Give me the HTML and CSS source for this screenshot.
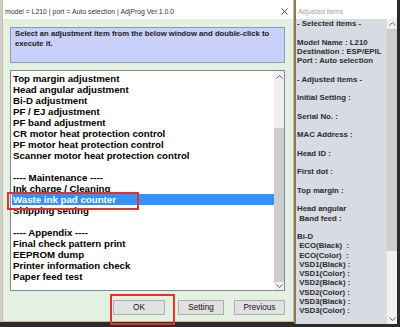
FILE: index.html
```html
<!DOCTYPE html>
<html lang="en">
<head>
  <meta charset="UTF-8" />
  <title>AdjProg</title>
  <link rel="stylesheet" href="styles.css">
</head>
<body>
  <div class="desktop">
    <div class="edge"></div>

    <section class="main-window">
      <header class="title-bar">
        <span class="title">model = L210 | port = Auto selection | AdjProg Ver.1.0.0</span>
        <svg class="close" width="7" height="7" viewBox="0 0 7 7">
          <path d="M0.5 0.5 L6.5 6.5 M6.5 0.5 L0.5 6.5" stroke="#444" stroke-width="1" fill="none"/>
        </svg>
      </header>

      <div class="instructions">Select an adjustment item from the below window and double-click to execute it.</div>

      <div class="list-box">
        <ul class="list-items">
          <li>Top margin adjustment</li>
          <li>Head angular adjustment</li>
          <li>Bi-D adjustment</li>
          <li>PF / EJ adjustment</li>
          <li>PF band adjustment</li>
          <li>CR motor heat protection control</li>
          <li>PF motor heat protection control</li>
          <li>Scanner motor heat protection control</li>
          <li>&nbsp;</li>
          <li>---- Maintenance ----</li>
          <li>Ink charge / Cleaning</li>
          <li class="selected">Waste ink pad counter</li>
          <li>Shipping setting</li>
          <li>&nbsp;</li>
          <li>---- Appendix ----</li>
          <li>Final check pattern print</li>
          <li>EEPROM dump</li>
          <li>Printer information check</li>
          <li>Paper feed test</li>
        </ul>
        <div class="scrollbar list-scroll">
          <div class="sb-btn sb-up">
            <svg width="7" height="4" viewBox="0 0 7 4"><path d="M0.5 3.5 L3.5 0.5 L6.5 3.5" stroke="#606060" fill="none"/></svg>
          </div>
          <div class="sb-gap"></div>
          <div class="sb-thumb"></div>
          <div class="sb-btn sb-down">
            <svg width="7" height="4" viewBox="0 0 7 4"><path d="M0.5 0.5 L3.5 3.5 L6.5 0.5" stroke="#606060" fill="none"/></svg>
          </div>
        </div>
      </div>

      <div class="button-row">
        <button class="btn btn-ok">OK</button>
        <button class="btn btn-setting">Setting</button>
        <button class="btn btn-previous">Previous</button>
      </div>
    </section>

    <section class="side-window">
      <header class="side-title">Adjusted items</header>
      <div class="side-body">
        <pre class="side-text">- Selected items -

Model Name : L210
Destination : ESP/EPIL
Port : Auto selection

- Adjusted items -

Initial Setting :

Serial No. :

MAC Address :

Head ID :

First dot :

Top margin :

Head angular
 Band feed :

Bi-D
 ECO(Black)  :
 ECO(Color)  :
 VSD1(Black) :
 VSD1(Color) :
 VSD2(Black) :
 VSD2(Color) :
 VSD3(Black) :
 VSD3(Color) :</pre>
        <div class="scrollbar side-scroll">
          <div class="sb-btn side-up">
            <svg width="7" height="4" viewBox="0 0 7 4"><path d="M0.5 3.5 L3.5 0.5 L6.5 3.5" stroke="#606060" fill="none"/></svg>
          </div>
          <div class="side-thumb"></div>
          <div class="sb-gap side-gap"></div>
          <div class="sb-btn side-down">
            <svg width="7" height="4" viewBox="0 0 7 4"><path d="M0.5 0.5 L3.5 3.5 L6.5 0.5" stroke="#606060" fill="none"/></svg>
          </div>
        </div>
      </div>
    </section>
  </div>

  <div class="mark mark-item"></div>
  <div class="mark mark-ok"></div>
</body>
</html>
```

FILE: styles.css
```css
* {
  margin: 0;
  padding: 0;
  box-sizing: border-box;
}

body {
  width: 400px;
  height: 327px;
  overflow: hidden;
  position: relative;
  background-color: #2d2b29;
  font-family: "Liberation Sans", Arial, sans-serif;
  color: #000;
}

.desktop {
  display: flex;
  align-items: flex-start;
}

.edge {
  width: 2px;
  height: 322px;
  background-color: #cfcfcf;
}

/* main dialog */

.main-window {
  width: 292px;
  height: 322px;
  display: flex;
  flex-direction: column;
  background-color: #e4f1e2;
  border: 1px solid #cfbf95;
  border-top: none;
}

.title-bar {
  height: 19px;
  padding: 3px 5px 0 2px;
  display: flex;
  align-items: center;
  justify-content: space-between;
  background-color: #fff;
}

.title {
  font-size: 6.9px;
  color: #333;
  white-space: nowrap;
}

.instructions {
  width: 275px;
  height: 36px;
  margin: 8px 0 0 7px;
  padding: 1px 4px;
  background-color: #c9d1fb;
  border: 1px solid #8f97b8;
  font-size: 7.7px;
  font-weight: bold;
  line-height: 10px;
  color: #1a1a1a;
}

.list-box {
  width: 275px;
  height: 221px;
  margin: 7px 0 0 7px;
  display: flex;
  background-color: #fff;
  border: 1px solid #82878f;
}

.list-items {
  flex: 1;
  list-style: none;
  padding: 1.5px 0 0 1px;
  font-size: 9.7px;
  font-weight: bold;
  line-height: 11px;
  white-space: nowrap;
}

.list-items li {
  padding-left: 1px;
}

.list-items li.selected {
  background-color: #3392fb;
  color: #fff;
}

.scrollbar {
  width: 10px;
  display: flex;
  flex-direction: column;
  background-color: #f0f0f0;
}

.sb-btn {
  display: flex;
  align-items: center;
  justify-content: center;
}

.sb-up { height: 12px; }
.sb-gap { height: 45px; }
.sb-down { height: 8px; }

.sb-thumb {
  height: 154px;
  background-color: #cdcdcd;
}

.button-row {
  display: flex;
  margin-top: 9px;
  padding-left: 110px;
}

.btn {
  height: 15px;
  font-family: "Liberation Sans", Arial, sans-serif;
  font-size: 8.2px;
  color: #111;
  background-color: #e1e1e1;
  border: 1px solid #adadad;
}

.btn-ok { width: 52px; }
.btn-setting { width: 46px; margin-left: 13px; }
.btn-previous { width: 51px; margin-left: 10px; }

/* side panel */

.side-window {
  width: 103px;
  height: 324px;
  display: flex;
  flex-direction: column;
  border-left: 2px solid #857c5e;
}

.side-title {
  height: 19px;
  padding: 3px 0 0 2px;
  display: flex;
  align-items: center;
  background-color: #fff;
  font-size: 6.9px;
  color: #a5a5a5;
}

.side-body {
  flex: 1;
  display: flex;
}

.side-text {
  flex: 1;
  overflow: hidden;
  padding: 0.4px 0 0 1px;
  background-color: #d7dbe4;
  font-family: "Liberation Sans", Arial, sans-serif;
  font-size: 7.8px;
  font-weight: bold;
  line-height: 9.25px;
  color: #2b2b2b;
}

.side-up { height: 10px; }

.side-thumb {
  height: 222px;
  background-color: #cdcdcd;
}

.side-gap { height: 62px; }
.side-down { height: 11px; }

/* red annotation boxes */

.mark {
  position: absolute;
  border: 2px solid #e2322e;
}

.mark-item {
  left: 7px;
  top: 192px;
  width: 132px;
  height: 18px;
}

.mark-ok {
  left: 110px;
  top: 294px;
  width: 65px;
  height: 31px;
}
```
